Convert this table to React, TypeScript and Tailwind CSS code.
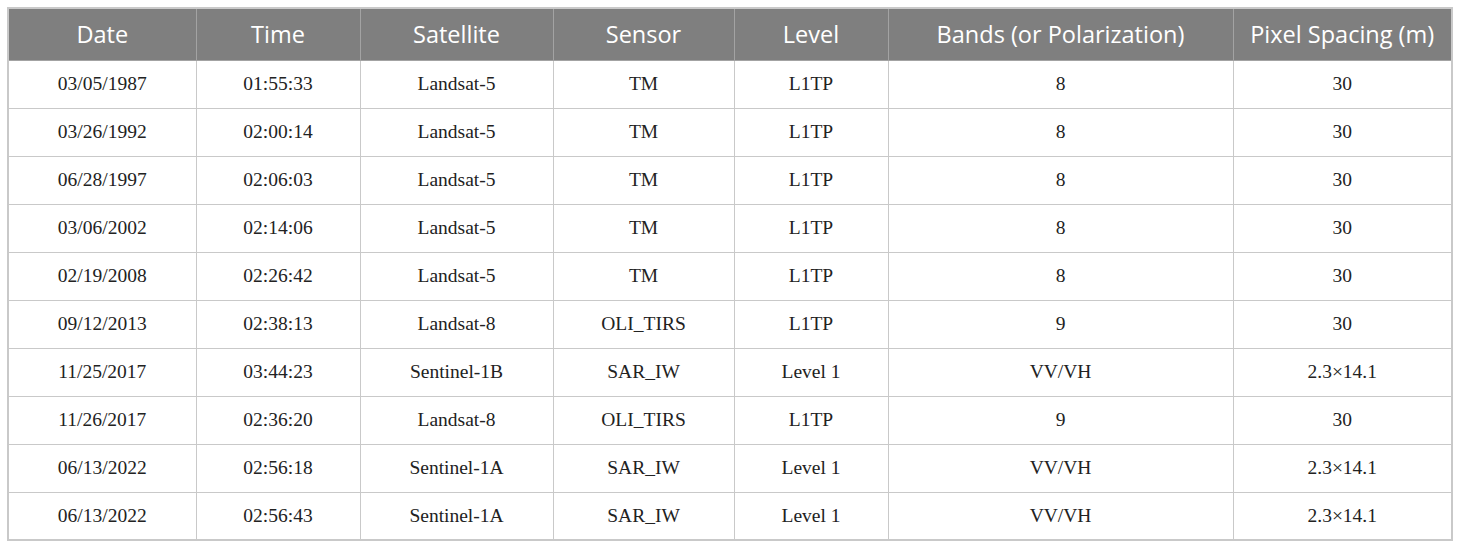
import React from "react";

const headers = ["Date", "Time", "Satellite", "Sensor", "Level", "Bands (or Polarization)", "Pixel Spacing (m)"];
const widths = ["w-[188px]", "w-[164px]", "w-[193px]", "w-[181px]", "w-[154px]", "w-[345px]", "w-[219px]"];

const rows: string[][] = [
  ["03/05/1987", "01:55:33", "Landsat-5", "TM", "L1TP", "8", "30"],
  ["03/26/1992", "02:00:14", "Landsat-5", "TM", "L1TP", "8", "30"],
  ["06/28/1997", "02:06:03", "Landsat-5", "TM", "L1TP", "8", "30"],
  ["03/06/2002", "02:14:06", "Landsat-5", "TM", "L1TP", "8", "30"],
  ["02/19/2008", "02:26:42", "Landsat-5", "TM", "L1TP", "8", "30"],
  ["09/12/2013", "02:38:13", "Landsat-8", "OLI_TIRS", "L1TP", "9", "30"],
  ["11/25/2017", "03:44:23", "Sentinel-1B", "SAR_IW", "Level 1", "VV/VH", "2.3×14.1"],
  ["11/26/2017", "02:36:20", "Landsat-8", "OLI_TIRS", "L1TP", "9", "30"],
  ["06/13/2022", "02:56:18", "Sentinel-1A", "SAR_IW", "Level 1", "VV/VH", "2.3×14.1"],
  ["06/13/2022", "02:56:43", "Sentinel-1A", "SAR_IW", "Level 1", "VV/VH", "2.3×14.1"],
];

export default function App() {
  return (
    <div className="w-[1460px] h-[550px] bg-white pt-[7px] pl-[7px]">
      <table className="border-collapse table-fixed border-2 border-[#c9c9c9]">
        <colgroup>
          {widths.map((w, i) => (
            <col key={i} className={w} />
          ))}
        </colgroup>
        <thead>
          <tr className="h-[52px] bg-[#7f7f7f]">
            {headers.map((h, i) => (
              <th
                key={i}
                className="border border-[#a3a3a3] text-center align-middle font-normal text-white text-[23.5px] p-0 font-['Open_Sans',sans-serif]"
              >
                {h}
              </th>
            ))}
          </tr>
        </thead>
        <tbody>
          {rows.map((r, ri) => (
            <tr key={ri} className="h-[48px]">
              {r.map((c, ci) => (
                <td
                  key={ci}
                  className="border border-[#c9c9c9] text-center align-middle text-[19.5px] text-[#222222] p-0 font-['Liberation_Serif',serif]"
                >
                  {c}
                </td>
              ))}
            </tr>
          ))}
        </tbody>
      </table>
    </div>
  );
}
